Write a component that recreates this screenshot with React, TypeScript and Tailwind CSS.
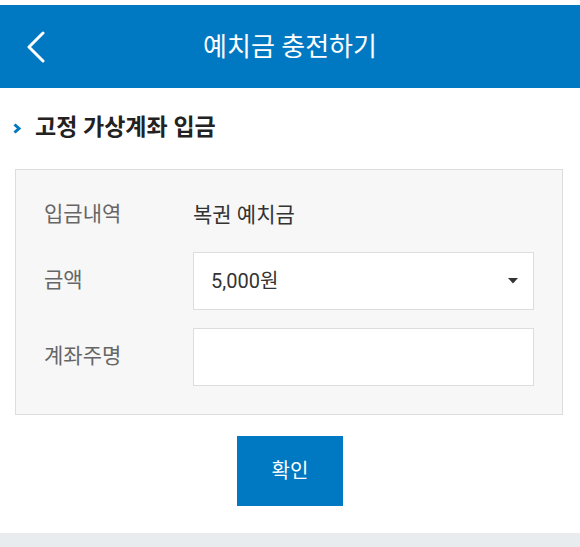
import React, { useState } from "react";

const font = { fontFamily: 'Roboto, "Noto Sans CJK KR", "Noto Sans", sans-serif' };

function Header() {
    return (
        <div className="pt-[5px] bg-white">
            <div className="h-[83px] bg-[#0079c2] flex items-center relative">
                <button className="w-[72px] h-full flex items-center justify-center">
                    <svg width="20" height="32" viewBox="0 0 20 32" fill="none">
                        <path d="M17 2 L3 16 L17 30" stroke="white" strokeWidth="3" strokeLinecap="round" strokeLinejoin="round" />
                    </svg>
                </button>
                <h1 className="absolute left-0 right-0 text-center text-white text-[26px] pointer-events-none leading-none">예치금 충전하기</h1>
            </div>
        </div>
    )
}

function FormRow({ label, children }: { label: string, children: React.ReactNode }) {
    return (
        <div className="flex items-center">
            <div className="w-[149px] text-[21px] text-[#666]">{label}</div>
            <div className="flex-1">{children}</div>
        </div>
    )
}

export default function App() {
    const [amount] = useState("5,000원")
    const [name, setName] = useState("")

    return (
        <div className="w-[580px] h-[547px] bg-white flex flex-col" style={font}>
            <Header />
            <div className="flex items-center h-[80px] pl-[13px] gap-[14px]">
                <svg width="8" height="11" viewBox="0 0 8 11">
                    <path d="M1.5 1.5 L6 5.5 L1.5 9.5" stroke="#0079c2" strokeWidth="3" fill="none" />
                </svg>
                <h2 className="text-[23px] font-bold text-[#222]">고정 가상계좌 입금</h2>
            </div>
            <div className="ml-[15px] mr-[17px] mt-px bg-[#f7f7f7] border border-[#dcdcdc] pl-[28px] pr-[28px] pt-[23px] pb-[28px]">
                <div className="h-[44px]">
                    <FormRow label="입금내역">
                        <span className="text-[21px] text-[#333] leading-[44px]">복권 예치금</span>
                    </FormRow>
                </div>
                <div className="mt-[15px]">
                    <FormRow label="금액">
                        <div className="h-[58px] bg-white border border-[#dddddd] flex items-center justify-between pl-[17px] pr-[15px]">
                            <span className="text-[20px] text-[#333]">{amount}</span>
                            <svg width="10" height="6" viewBox="0 0 10 6">
                                <path d="M0 0 H10 L5 5.5 Z" fill="#333" />
                            </svg>
                        </div>
                    </FormRow>
                </div>
                <div className="mt-[18px]">
                    <FormRow label="계좌주명">
                        <input
                            className="w-full h-[58px] bg-white border border-[#dddddd] px-[17px] text-[20px] text-[#333] outline-none"
                            value={name}
                            onChange={(e) => setName(e.target.value)}
                        />
                    </FormRow>
                </div>
            </div>
            <div className="flex justify-center mt-[21px]">
                <button className="w-[106px] h-[70px] bg-[#0079c2] text-white text-[20px]">확인</button>
            </div>
            <div className="flex-1" />
            <div className="h-[14px] bg-[#e9ecee]" />
        </div>
    )
}
